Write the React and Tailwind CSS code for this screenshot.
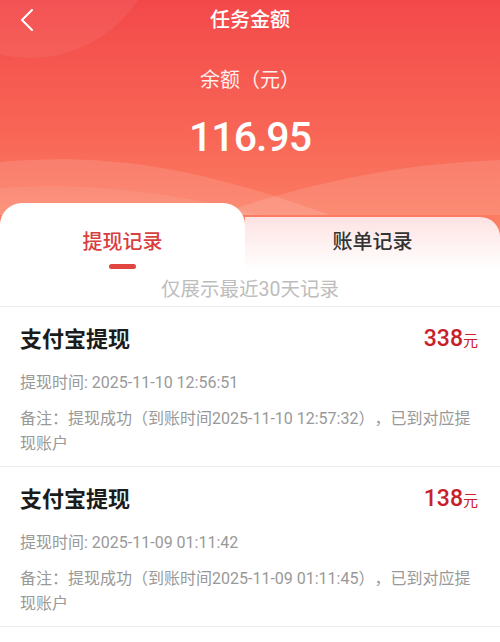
import React, { useState } from 'react';

const records = [
  {
    id: 1,
    title: '支付宝提现',
    amount: '338',
    time: '2025-11-10 12:56:51',
    note: '备注：提现成功（到账时间2025-11-10 12:57:32），已到对应提现账户',
  },
  {
    id: 2,
    title: '支付宝提现',
    amount: '138',
    time: '2025-11-09 01:11:42',
    note: '备注：提现成功（到账时间2025-11-09 01:11:45），已到对应提现账户',
  },
];

const App = () => {
  const [tab, setTab] = useState('withdraw');

  return (
    <div
      className="w-[500px] min-h-[642px] bg-white overflow-hidden [text-spacing-trim:space-all]"
      style={{ fontFamily: '"Roboto", "Noto Sans CJK SC", sans-serif' }}
    >
      {/* Header */}
      <div className="relative h-[270px] flex flex-col bg-gradient-to-b from-[#f3484a] via-[#f86656] to-[#fd8a68]">
        {/* background decoration */}
        <svg className="absolute inset-0 pointer-events-none" width="500" height="270" viewBox="0 0 500 270">
          <circle cx="30" cy="-72" r="130" fill="#ffffff" fillOpacity="0.06" />
          <path d="M0 162 C 110 152, 200 168, 330 215 L 0 215 Z" fill="#ffffff" fillOpacity="0.12" />
          <path d="M500 160 C 400 164, 320 180, 215 215 L 500 215 Z" fill="#ffffff" fillOpacity="0.12" />
          <path d="M0 188 C 90 182, 170 192, 260 215 L 0 215 Z" fill="#ffffff" fillOpacity="0.07" />
        </svg>

        {/* Nav bar */}
        <div className="relative h-[40px] flex items-center justify-center">
          <button className="absolute left-[14px] top-[6px] w-[26px] h-[28px] flex items-center justify-center">
            <svg width="14" height="24" viewBox="0 0 14 24" fill="none">
              <path d="M12 2 L2 12 L12 22" stroke="#ffffff" strokeWidth="2" strokeLinecap="round" strokeLinejoin="round" />
            </svg>
          </button>
          <h1 className="text-[20px] leading-[28px] font-medium text-white">任务金额</h1>
        </div>

        {/* Balance */}
        <div className="relative flex flex-col items-center">
          <p className="mt-[26px] text-[20px] leading-[28px] text-white/90">余额（元）</p>
          <p className="mt-[19px] text-[41px] leading-[48px] font-medium text-white tracking-[-1px]">116.95</p>
        </div>

        {/* Tabs */}
        <div className="relative mt-auto flex items-end">
          <button
            onClick={() => setTab('withdraw')}
            className="w-[245px] h-[67px] bg-white rounded-t-[22px] flex flex-col items-center pt-[25px]"
          >
            <span className={`text-[20px] leading-[28px] font-medium ${tab === 'withdraw' ? 'text-[#d8403f]' : 'text-[#333333]'}`}>
              提现记录
            </span>
            <span className="mt-[8px] w-[27px] h-[5px] rounded-full bg-[#e0463f]" />
          </button>
          <button
            onClick={() => setTab('bill')}
            className="flex-1 h-[53px] rounded-tr-[20px] bg-gradient-to-b from-[#fde2e2] to-[#ffffff] flex justify-center pt-[11px]"
          >
            <span className={`text-[20px] leading-[28px] font-medium ${tab === 'bill' ? 'text-[#d8403f]' : 'text-[#333333]'}`}>
              账单记录
            </span>
          </button>
        </div>
      </div>

      {/* Hint */}
      <div className="h-[37px] flex items-start justify-center pt-[6px] border-b border-[#ececec]">
        <p className="text-[19.5px] leading-[28px] text-[#bdbdbd]">仅展示最近30天记录</p>
      </div>

      {/* Records */}
      <div>
        {records.map((r) => (
          <div key={r.id} className="h-[160px] px-[20px] pt-[18px] border-b border-[#ececec]">
            <div className="flex items-center justify-between">
              <span className="text-[22px] leading-[28px] font-bold text-[#1b1b1b]">{r.title}</span>
              <span className="text-[#c8202b] leading-[28px] pr-[2px]">
                <span className="text-[23px] font-medium">{r.amount}</span>
                <span className="text-[15px]">元</span>
              </span>
            </div>
            <p className="mt-[16px] text-[16px] leading-[24px] text-[#999999]">提现时间: {r.time}</p>
            <p className="mt-[11px] text-[16px] leading-[25px] text-[#999999]">{r.note}</p>
          </div>
        ))}
      </div>
    </div>
  );
};

export default App;
